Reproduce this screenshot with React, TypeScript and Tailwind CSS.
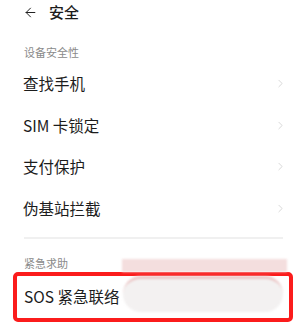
import { ChevronRight, ArrowLeft } from "lucide-react";

const font = { fontFamily: '"Noto Sans CJK SC", "Noto Sans", sans-serif' };

const rows = ["查找手机", "SIM 卡锁定", "支付保护", "伪基站拦截"];

function Row({ label }: { label: string }) {
  return (
    <div className="flex h-[41.5px] items-center justify-between pl-[23px] pr-[20px]">
      <span className="text-[15.5px] text-[#1c1c1c]">{label}</span>
      <ChevronRight className="h-[13px] w-[13px] text-[#cfcfcf]" strokeWidth={1.5} />
    </div>
  );
}

export default function App() {
  return (
    <div className="relative h-[333px] w-[307px] overflow-hidden bg-white" style={font}>
      <div className="flex h-[25px] items-center gap-[11px] pl-[23px]">
        <ArrowLeft className="h-[15px] w-[15px] text-[#222]" strokeWidth={1.6} />
        <span className="text-[15px] font-medium text-[#1c1c1c]">安全</span>
      </div>

      <div className="mt-[19px] flex h-[16px] items-center pl-[24px] text-[11px] text-[#8a8a8a]">
        设备安全性
      </div>

      <div className="mt-[3px] flex flex-col">
        {rows.map((r) => (
          <Row key={r} label={r} />
        ))}
      </div>

      <div className="mx-[24px] mt-[8px] h-[2px] bg-[#f0f0f0]" />

      <div className="mt-[16px] flex h-[16px] items-center pl-[24px] text-[11px] text-[#8a8a8a]">
        紧急求助
      </div>

      <div className="ml-[13px] mt-[1px] flex h-[50px] w-[280px] items-center rounded-[5px] border-[4px] border-[#fb1c1c] pl-[7px]">
        <span className="text-[15.5px] text-[#1c1c1c]">SOS 紧急联络</span>
      </div>

      {/* blurred-out overlay */}
      <div className="absolute left-[122px] top-[259px] h-[13px] w-[165px] bg-[#f4dede] blur-[1px]" />
      <div className="absolute left-[123px] top-[276px] h-[36px] w-[160px] rounded-full border-t-[3px] border-[#ebc6c6] bg-[#f3f1f1] blur-[1px]" />
    </div>
  );
}
